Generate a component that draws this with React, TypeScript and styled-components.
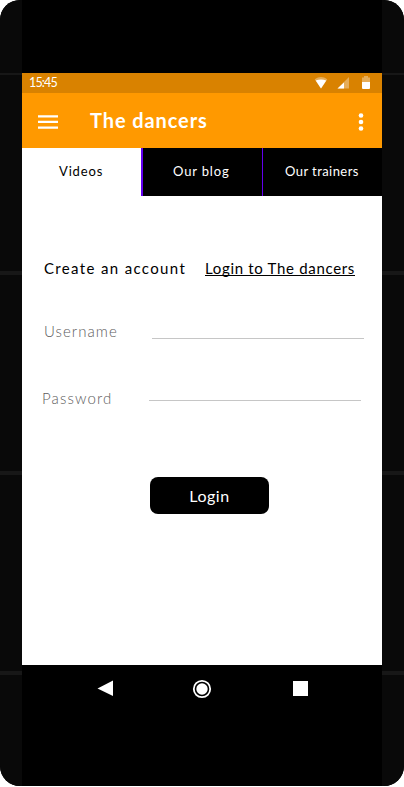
import React from "react";
import styled, { createGlobalStyle } from "styled-components";

const GlobalStyle = createGlobalStyle`
  * { box-sizing: border-box; }
  body {
    margin: 0;
    background: #fff;
    font-family: "Century Gothic", Lato, sans-serif;
    font-variant-ligatures: none;
  }
`;

const Device = styled.div`
  width: 404px;
  height: 786px;
  display: flex;
  border-radius: 20px;
  overflow: hidden;
  background: #000;
`;

const Rail = styled.div`
  width: 22px;
  height: 786px;
  flex: none;
  display: flex;
  flex-direction: column;
  background: #090909;
`;

const Seam = styled.div<{ $gap: number; $size: number }>`
  height: ${(p) => p.$size}px;
  margin-top: ${(p) => p.$gap}px;
  flex: none;
  background: #171717;
`;

const Screen = styled.div`
  width: 360px;
  height: 786px;
  padding-top: 73px;
  display: flex;
  flex-direction: column;
`;

const StatusBar = styled.div`
  height: 20px;
  flex: none;
  display: flex;
  justify-content: space-between;
  background: #d98200;
  color: #fff;
`;

const Clock = styled.span`
  margin: 2px 0 0 7px;
  font-size: 12.5px;
  line-height: 16px;
  letter-spacing: -0.85px;
`;

const AppBar = styled.header`
  height: 55px;
  flex: none;
  display: flex;
  background: #ff9900;
  color: #fff;
`;

const MenuButton = styled.button`
  width: 68px;
  padding: 21px 0 0 16px;
  border: 0;
  background: none;
  display: flex;
  align-items: flex-start;
`;

const Title = styled.h1`
  margin: 15px 0 0;
  flex: 1;
  font-size: 20px;
  line-height: 24px;
  font-weight: 700;
  letter-spacing: 0.9px;
`;

const MoreButton = styled.button`
  width: 26px;
  padding: 19px 0 0;
  border: 0;
  background: none;
  display: flex;
  align-items: flex-start;
`;

const Tabs = styled.nav`
  height: 48px;
  flex: none;
  display: flex;
  background: #000;
`;

const Tab = styled.a<{ $active?: boolean; $rule?: number; $spacing: number; $inset?: number }>`
  width: ${(p) => 119 + (p.$rule ?? 0)}px;
  border-left: ${(p) => p.$rule ?? 0}px solid #6200ee;
  padding: 15px 0 0 ${(p) => p.$inset ?? 0}px;
  font-size: 13px;
  line-height: 16px;
  letter-spacing: ${(p) => p.$spacing}px;
  background: ${(p) => (p.$active ? "#fff" : "#000")};
  color: ${(p) => (p.$active ? "#000" : "#fff")};
  white-space: nowrap;
`;

const Content = styled.main`
  height: 469px;
  flex: none;
  padding-top: 62px;
  background: #fff;
  color: #000;
  font-size: 15px;
  line-height: 20px;
`;

const Links = styled.div`
  display: flex;
  height: 20px;
  padding-left: 22px;
  white-space: nowrap;
`;

const Create = styled.span`
  width: 161px;
  letter-spacing: 1.35px;
`;

const LoginLink = styled.a`
  height: 18px;
  border-bottom: 1px solid #000;
  width: 150px;
  letter-spacing: 0.68px;
`;

const Field = styled.label<{ $top: number; $left: number; $label: number; $line: number; $spacing: number }>`
  display: flex;
  height: 20px;
  margin-top: ${(p) => p.$top}px;
  padding-left: ${(p) => p.$left}px;
  color: #5c5c5c;
  font-weight: 300;
  letter-spacing: ${(p) => p.$spacing}px;

  span { width: ${(p) => p.$label}px; }

  input {
    width: 212px;
    height: ${(p) => p.$line}px;
    padding: 0;
    border: 0;
    border-bottom: 1px solid #c6c6c6;
    border-radius: 0;
    background: transparent;
    outline: none;
    font: inherit;
  }
`;

const Submit = styled.button`
  display: block;
  width: 119px;
  height: 37px;
  margin: 69px 0 0 128px;
  padding: 0;
  border: 0;
  border-radius: 8px;
  background: #000;
  color: #fff;
  font: 16px/20px "Century Gothic", Lato, sans-serif;
  letter-spacing: 0.5px;
`;

const NavBar = styled.footer`
  height: 48px;
  flex: none;
  display: flex;
  background: #000;
`;

const Side = () => (
  <Rail>
    <Seam $gap={73} $size={2} />
    <Seam $gap={196} $size={4} />
    <Seam $gap={196} $size={4} />
    <Seam $gap={196} $size={4} />
  </Rail>
);

const StatusIcons = () => (
  <svg width="72" height="20" fill="#fff">
    <path d="M4.7 6.2Q11 2 17.3 6.2L11 15.5Z" opacity=".35" />
    <path d="M5.7 7.4Q11 5.4 16.3 7.4L11 15.5Z" />
    <path d="M27.5 15.5L39 4V15.5Z" opacity=".35" />
    <path d="M27.5 15.5L34 9.5V15.5Z" />
    <path d="M52 9V4.5H54V3H58V4.5H60V9Z" opacity=".35" />
    <path d="M52 9H60V15Q60 16 59 16H53Q52 16 52 15Z" />
  </svg>
);

export default function App() {
  return (
    <>
      <GlobalStyle />
      <Device>
        <Side />
        <Screen>
          <StatusBar>
            <Clock>15:45</Clock>
            <StatusIcons />
          </StatusBar>
          <AppBar>
            <MenuButton aria-label="Menu">
              <svg width="20" height="16" fill="#fff">
                <path d="M0 1.2h20v2.3H0zM0 6.8h20v2.3H0zM0 12.4h20v2.3H0z" />
              </svg>
            </MenuButton>
            <Title>The dancers</Title>
            <MoreButton aria-label="More">
              <svg width="10" height="20" fill="#fff">
                <circle cx="5" cy="3.5" r="2.3" />
                <circle cx="5" cy="10" r="2.3" />
                <circle cx="5" cy="16.5" r="2.3" />
              </svg>
            </MoreButton>
          </AppBar>
          <Tabs>
            <Tab $active $inset={37} $spacing={0.85}>Videos</Tab>
            <Tab $rule={2} $inset={30} $spacing={0.85}>Our blog</Tab>
            <Tab $rule={1} $inset={22} $spacing={0.43}>Our trainers</Tab>
          </Tabs>
          <Content>
            <Links>
              <Create>Create an account</Create>
              <LoginLink>Login to The dancers</LoginLink>
            </Links>
            <Field $top={43} $left={22} $label={108} $line={18} $spacing={1.05}>
              <span>Username</span>
              <input aria-label="Username" />
            </Field>
            <Field $top={47} $left={20} $label={107} $line={13} $spacing={1.15}>
              <span>Password</span>
              <input aria-label="Password" type="password" />
            </Field>
            <Submit>Login</Submit>
          </Content>
          <NavBar>
            <svg width="360" height="48" fill="#fff">
              <path d="M75.5 23.5L91 15.5V31Z" />
              <circle cx="180" cy="24" r="8.2" fill="none" stroke="#fff" strokeWidth="1.8" />
              <circle cx="180" cy="24" r="5.7" />
              <path d="M271 16h15v15h-15z" />
            </svg>
          </NavBar>
        </Screen>
        <Side />
      </Device>
    </>
  );
}
